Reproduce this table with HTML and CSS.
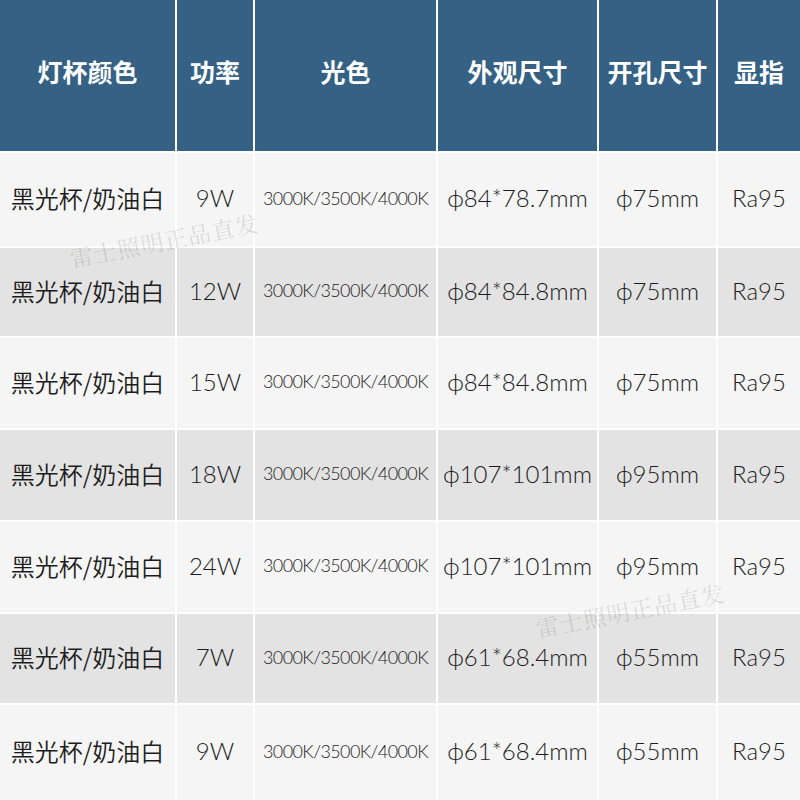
FILE: index.html
```html
<!DOCTYPE html>
<html lang="zh">
<head>
<meta charset="utf-8">
<link rel="stylesheet" href="styles.css">
</head>
<body>
<div class="page">
  <div class="table">
    <div class="cell head">灯杯颜色</div>
    <div class="cell head">功率</div>
    <div class="cell head">光色</div>
    <div class="cell head">外观尺寸</div>
    <div class="cell head">开孔尺寸</div>
    <div class="cell head">显指</div>

    <div class="cell light cn">黑光杯/奶油白</div>
    <div class="cell light num">9W</div>
    <div class="cell light k">3000K/3500K/4000K</div>
    <div class="cell light num">ϕ84*78.7mm</div>
    <div class="cell light num">ϕ75mm</div>
    <div class="cell light num">Ra95</div>

    <div class="cell grey cn">黑光杯/奶油白</div>
    <div class="cell grey num">12W</div>
    <div class="cell grey k">3000K/3500K/4000K</div>
    <div class="cell grey num">ϕ84*84.8mm</div>
    <div class="cell grey num">ϕ75mm</div>
    <div class="cell grey num">Ra95</div>

    <div class="cell light cn">黑光杯/奶油白</div>
    <div class="cell light num">15W</div>
    <div class="cell light k">3000K/3500K/4000K</div>
    <div class="cell light num">ϕ84*84.8mm</div>
    <div class="cell light num">ϕ75mm</div>
    <div class="cell light num">Ra95</div>

    <div class="cell grey cn">黑光杯/奶油白</div>
    <div class="cell grey num">18W</div>
    <div class="cell grey k">3000K/3500K/4000K</div>
    <div class="cell grey num">ϕ107*101mm</div>
    <div class="cell grey num">ϕ95mm</div>
    <div class="cell grey num">Ra95</div>

    <div class="cell light cn">黑光杯/奶油白</div>
    <div class="cell light num">24W</div>
    <div class="cell light k">3000K/3500K/4000K</div>
    <div class="cell light num">ϕ107*101mm</div>
    <div class="cell light num">ϕ95mm</div>
    <div class="cell light num">Ra95</div>

    <div class="cell grey cn">黑光杯/奶油白</div>
    <div class="cell grey num">7W</div>
    <div class="cell grey k">3000K/3500K/4000K</div>
    <div class="cell grey num">ϕ61*68.4mm</div>
    <div class="cell grey num">ϕ55mm</div>
    <div class="cell grey num">Ra95</div>

    <div class="cell light cn">黑光杯/奶油白</div>
    <div class="cell light num">9W</div>
    <div class="cell light k">3000K/3500K/4000K</div>
    <div class="cell light num">ϕ61*68.4mm</div>
    <div class="cell light num">ϕ55mm</div>
    <div class="cell light num">Ra95</div>
  </div>
  <div class="watermark wm1">雷士照明正品直发</div>
  <div class="watermark wm2">雷士照明正品直发</div>
</div>
</body>
</html>
```

FILE: styles.css
```css
html, body {
  margin: 0;
  padding: 0;
  background: #ffffff;
}
.page {
  position: relative;
  width: 800px;
  height: 800px;
  overflow: hidden;
}
.table {
  display: grid;
  grid-template-columns: 175px 76px 181px 159px 117px 82px;
  grid-template-rows: 151px 93px 88px 90px 90px 90px 89px 95px;
  column-gap: 2px;
  row-gap: 2px;
  background: #ffffff;
  width: 800px;
  height: 800px;
}
.cell {
  display: flex;
  align-items: center;
  justify-content: center;
  color: #1c1c1c;
  white-space: nowrap;
}
.head {
  background: #346184;
  color: #ffffff;
  font-family: "Noto Sans CJK SC", sans-serif;
  font-weight: 700;
  font-size: 25px;
  padding-bottom: 10px;
}
.light { background: #f5f5f5; }
.grey { background: #e3e3e3; }
.cn {
  font-family: "Noto Sans CJK SC", sans-serif;
  font-weight: 350;
  font-size: 24px;
  padding-bottom: 4px;
}
.num {
  font-family: Lato, "DejaVu Sans", sans-serif;
  font-weight: 300;
  font-size: 24px;
  padding-bottom: 4px;
}
.k {
  font-family: Lato, sans-serif;
  font-weight: 300;
  font-size: 18px;
  letter-spacing: -0.6px;
  padding-bottom: 4px;
}
.watermark {
  position: absolute;
  font-family: "Noto Serif CJK SC", "Noto Sans CJK SC", serif;
  font-size: 23px;
  color: rgba(0, 0, 0, 0.13);
  transform: rotate(-11deg);
  transform-origin: left center;
  letter-spacing: 1px;
}
.wm1 { left: 70px; top: 242px; }
.wm2 { left: 536px; top: 612px; }
```
